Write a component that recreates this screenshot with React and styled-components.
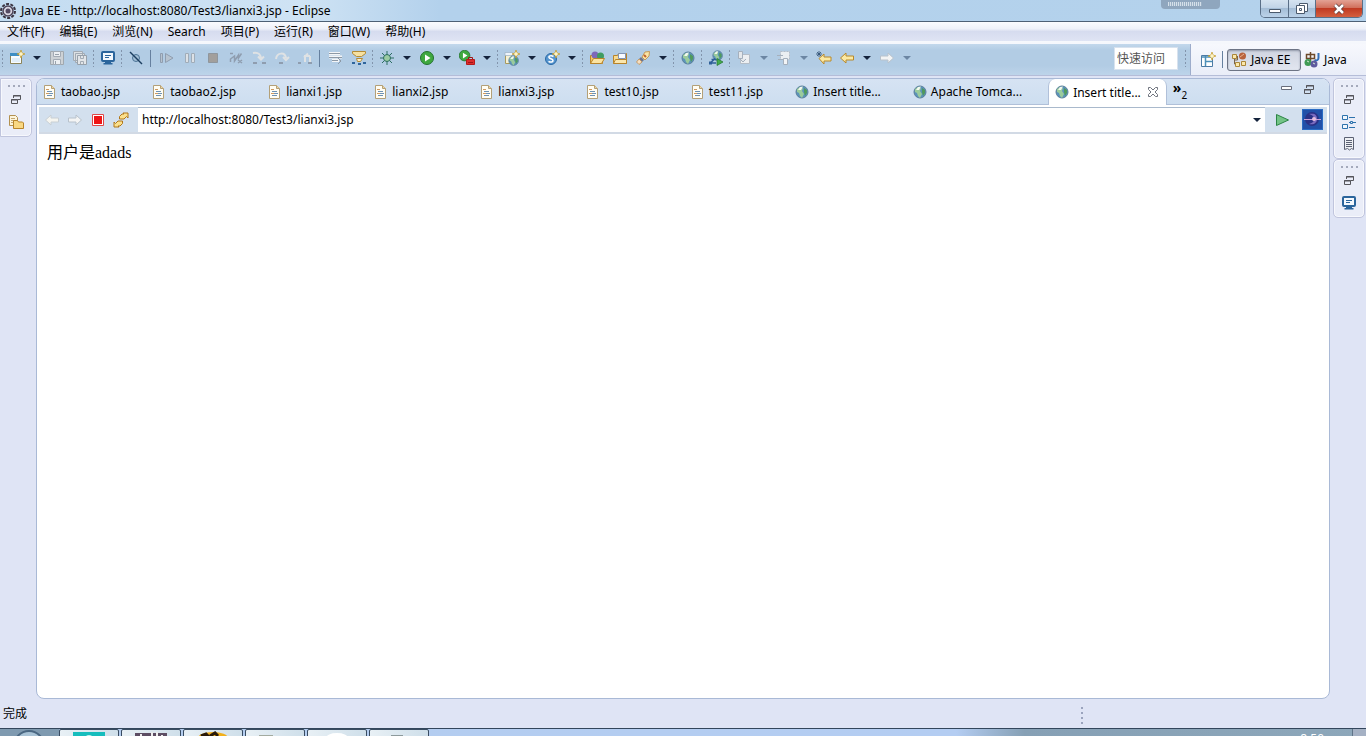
import React from 'react';
import styled, { createGlobalStyle } from 'styled-components';


const GlobalStyle = createGlobalStyle`
    * {
        box-sizing: border-box;
    }
    body {
        margin: 0;
        background: #dfe4f5;
        color: #000;
        font-family: 'Noto Sans', 'Noto Sans CJK SC', sans-serif;
        font-size: 12px;
    }
    button, input {
        font: inherit;
        color: inherit;
    }
    button {
        border: 0;
        padding: 0;
        background: none;
    }
    svg {
        display: block;
        flex: none;
    }
`

const Shell = styled.div`
    display: flex;
    flex-direction: column;
    height: 100vh;
    overflow: hidden;
`

/* title bar */
const TitleBar = styled.header`
    position: relative;
    display: flex;
    align-items: flex-start;
    height: 22px;
    background: linear-gradient(90deg, #c3dcf1 0, #cfe3f4 300px, #b3d1ec 440px, #b4d2ec 100%);
    border-bottom: 1px solid #4d6075;
    h1 {
        flex: 1;
        margin: 0;
        padding-left: 5px;
        font-size: 12px;
        font-weight: 400;
        line-height: 21px;
    }
    > svg {
        margin-top: 3px;
    }
`

const DockGrip = styled.div`
    position: absolute;
    top: 0;
    right: 146px;
    width: 59px;
    height: 9px;
    padding: 2px 7px;
    background: #8fa6be;
    border-radius: 0 0 4px 4px;
    div {
        width: 34px;
        height: 4px;
        background: repeating-linear-gradient(90deg, #d5e0ea 0 1px, #9bb0c5 1px 2px);
    }
`

const WindowButtons = styled.div`
    display: flex;
    height: 18px;
    margin-right: 3px;
    border: 1px solid #5a6f87;
    border-top: 0;
    border-radius: 0 0 5px 5px;
    overflow: hidden;
`

const WindowButton = styled.button`
    display: flex;
    align-items: center;
    justify-content: center;
    width: ${p => (p.$close ? '47px' : '27px')};
    border-left: ${p => (p.$first ? '0' : '1px solid #5a6f87')};
    background: ${p => p.$close
        ? 'linear-gradient(#e3a294 0, #d1705c 45%, #c03a22 50%, #d4603f 100%)'
        : 'linear-gradient(#d5e3f0 0, #c1d4e7 45%, #a4bdd6 50%, #bcd3e9 100%)'};
`

/* menu */
const MenuBar = styled.nav`
    display: flex;
    gap: 1px;
    height: 20px;
    background: linear-gradient(#fafbfe 0, #eef1f9 35%, #d6dcef 50%, #dfe4f4 100%);
    border-bottom: 1px solid #f6f8fc;
    button {
        padding: 0 7px;
        line-height: 19px;
    }
`

/* toolbar */
const ToolRow = styled.div`
    display: flex;
    height: 34px;
    border-top: 2px solid #f5f7fc;
    border-bottom: 1px solid #b5bdd8;
    background: #eef1fa;
`

const Toolbar = styled.div`
    display: flex;
    align-items: center;
    flex: 1;
    padding: 0 2px 3px 0;
    background: linear-gradient(#c3d8ec 0, #b2cce4 20%, #b2cce4 70%, #bdd4ea 100%);
`

const Grip = styled.span`
    flex: none;
    width: 1px;
    height: 17px;
    margin: 0 2px;
    background: repeating-linear-gradient(#8294ac 0 2px, transparent 2px 4px);
`

const Separator = styled.span`
    flex: none;
    width: 1px;
    height: 17px;
    margin: 0 4px 0 3px;
    background: #66809f;
`

const ToolButton = styled.button`
    display: flex;
    align-items: center;
    justify-content: center;
    width: 23px;
    height: 24px;
`

const MenuArrow = styled.button`
    display: flex;
    align-items: center;
    justify-content: center;
    width: 17px;
    height: 24px;
    &::before {
        content: '';
        border: 4px solid transparent;
        border-top-color: ${p => (p.$off ? '#6c86a3' : '#14233c')};
        border-bottom: 0;
    }
`

const QuickAccess = styled.input`
    width: 64px;
    height: 23px;
    margin: 0 5px 0 auto;
    padding: 0 2px;
    border: 1px solid #d8e2ee;
    background: #fff;
    &::placeholder {
        color: #555;
        opacity: 1;
    }
`

const Perspectives = styled.div`
    display: flex;
    align-items: center;
    width: 176px;
    padding-left: 5px;
    border-left: 1px solid #9daccb;
    background: linear-gradient(#f7f8fd, #e9edf8);
`

const Perspective = styled.button`
    display: flex;
    align-items: center;
    gap: 4px;
    min-width: ${p => (p.$on ? '74px' : '60px')};
    height: 22px;
    padding: 0 3px;
    white-space: nowrap;
    border: ${p => (p.$on ? '1px solid #6d7485' : '0')};
    border-radius: 3px;
    background: ${p => (p.$on ? 'linear-gradient(#cfd4e0, #e2e6f0)' : 'none')};
    box-shadow: ${p => (p.$on ? 'inset 0 1px 2px #9298a8' : 'none')};
`

/* workbench */
const Workbench = styled.main`
    display: flex;
    flex: 1;
    min-height: 0;
    padding-top: 2px;
`

const TrimColumn = styled.aside`
    display: flex;
    flex-direction: column;
    width: 33px;
`

const TrimStack = styled.div`
    display: flex;
    flex-direction: column;
    align-items: center;
    gap: 2px;
    width: 32px;
    padding: 6px 0 4px;
    border: 1px solid #c0c5dd;
    border-radius: ${p => (p.$left ? '0 5px 5px 0' : '5px')};
    background: #eaedf8;
    box-shadow: inset 0 0 0 1px #f7f8fd;
`

const TrimHandle = styled.span`
    width: 17px;
    height: 2px;
    margin-bottom: 1px;
    background: repeating-linear-gradient(90deg, #a4a9bb 0 2px, transparent 2px 5px);
`

const TrimButton = styled.button`
    display: flex;
    align-items: center;
    justify-content: center;
    width: 24px;
    height: 20px;
`

const Editor = styled.section`
    display: flex;
    flex-direction: column;
    flex: 1;
    min-width: 0;
    margin: 0 3px;
    border: 1px solid #a9b9d6;
    border-radius: 8px;
    background: #fff;
    overflow: hidden;
`

const TabBar = styled.div`
    display: flex;
    height: 26px;
    background: linear-gradient(#d6e3f3, #cddef0);
    border-bottom: 1px solid #b0c0d9;
`

const Tab = styled.div`
    display: flex;
    align-items: center;
    height: ${p => (p.$active ? '26px' : '25px')};
    padding: 0 ${p => (p.$active ? '7px' : '26px')} 0 5px;
    border: ${p => (p.$active ? '1px solid #b0c0d9' : '0')};
    border-width: 0 1px;
    border-radius: 7px 7px 0 0;
    background: ${p => (p.$active ? '#fff' : 'none')};
    button {
        display: flex;
        align-items: center;
        height: 25px;
        white-space: nowrap;
    }
    .title {
        gap: 3px;
    }
    .close {
        margin-left: 6px;
    }
`

const MoreTabs = styled.button`
    display: flex;
    align-items: flex-start;
    padding: 0 6px;
    line-height: 18px;
    b {
        font-size: 14px;
    }
    span {
        padding-top: 8px;
        font-size: 10px;
        line-height: 16px;
    }
`

const TabTools = styled.div`
    display: flex;
    align-items: flex-start;
    gap: 6px;
    margin-left: auto;
    padding: 3px 12px 0 0;
`

const BrowserBar = styled.div`
    display: flex;
    align-items: center;
    height: 27px;
    margin: 2px 2px 0;
    padding-left: 1px;
    background: #d3e0ee;
    border-bottom: 2px solid #d2dae5;
`

const UrlBox = styled.div`
    display: flex;
    flex: 1;
    height: 25px;
    margin: 0 5px 0 6px;
    background: #fff;
    border-top: 1px solid #a9b9cc;
    input {
        flex: 1;
        min-width: 0;
        padding: 0 4px 2px;
        border: 0;
        outline: 0;
        background: none;
    }
`

const EclipseBadge = styled.span`
    margin: 0 4px 0 9px;
`

const Page = styled.article`
    flex: 1;
    padding: 9px 10px;
    font-family: 'Liberation Serif', 'Noto Sans CJK SC', serif;
    font-size: 16px;
    line-height: 20px;
`

const StatusBar = styled.footer`
    display: flex;
    align-items: center;
    height: 29px;
    padding: 0 283px 2px 3px;
    span:last-child {
        margin: 5px 0 0 auto;
        width: 2px;
        height: 17px;
        background: repeating-linear-gradient(#9aa3bd 0 2px, transparent 2px 5px);
    }
`

/* only the top edge of the system taskbar is visible */
const Taskbar = styled.div`
    display: flex;
    gap: 2px;
    height: 8px;
    overflow: hidden;
    border-top: 1px solid #33465c;
    background: linear-gradient(90deg, #7f9ab0 0 59px, #b4cdef 60px, #b4cdf2 70%, #86a0b5 75%, #8da7ba 100%);
`

const Start = styled.button`
    width: 57px;
    height: 8px;
    svg {
        margin: 0 auto;
    }
`

const Task = styled.button`
    width: 60px;
    height: 9px;
    border: 1px solid #394c62;
    border-radius: 2px 2px 0 0;
    background: linear-gradient(90deg, #e8f0f5, #cfdfea);
    svg {
        margin: 1px auto 0;
    }
`

const Clock = styled.time`
    margin: 4px 26px 0 auto;
    color: #fff;
    line-height: 12px;
`

const ShowDesktop = styled.button`
    width: 14px;
    border-left: 1px solid #5f7488;
    background: #a5b1c4;
`

const Svg = ({ children, w = 16, h = 16 }) => (
    <svg width={w} height={h} viewBox={`0 0 ${w} ${h}`} fill="none">{children}</svg>
)

const Globe = ({ x = 0, y = 0 }) => (
    <g transform={`translate(${x} ${y})`}>
        <circle cx="7" cy="7" r="6" fill="#5b93ba" stroke="#5a7f99" />
        <path d="M2 4l3-2 3 1-1 3 2 3-2 4-2-2-1-3-2-1z" fill="#9acb9c" />
        <path d="M9 3l3 2v3l-2 3-1-4z" fill="#4f9a5c" />
        <path d="M3 5l2-3 3-.5L6 5z" fill="#f2f8ee" />
    </g>
)

const Play = ({ r = 6.500 }) => (
    <>
        <circle cx="8" cy="8" r={r} fill="#3ea83f" stroke="#23722f" />
        <path d="M6 4.500l5.500 3.500L6 11.500z" fill="#fff" />
    </>
)

const Spark = ({ x = 12, y = 4 }) => (
    <g transform={`translate(${x} ${y})`}>
        <path d="M0-4L1-1 4 0 1 1 0 4-1 1-4 0-1-1z" fill="#f6dc7c" stroke="#c29a2c" strokeWidth=".7" />
        <path d="M0-2v4M-2 0h4" stroke="#fffbe0" />
    </g>
)

const Arrow = ({ fill, stroke }) => (
    <path d="M1.500 8L7 3v3h7.500v4H7v3z" fill={fill} stroke={stroke} strokeLinejoin="round" />
)

const grey = '#8f9daf'

const icons = {
    eclipse: (
        <>
            <circle cx="8" cy="8" r="7" stroke="#3a3340" strokeWidth="2" strokeDasharray="3 1.400" />
            <circle cx="8" cy="8" r="5" fill="#d9d6e2" stroke="#4b4357" strokeWidth="1.500" />
            <circle cx="8" cy="8" r="2.500" fill="#544a63" />
        </>
    ),
    newFile: (
        <>
            <path d="M1.500 4.500h11v9h-11z" fill="#f8fcff" stroke="#8b8358" />
            <path d="M1 3h9v3H1z" fill="#3e8ec4" />
            <path d="M3 8h8v4H3z" fill="#e2effa" />
            <Spark x={12} y={4} />
        </>
    ),
    save: (
        <>
            <path d="M1.500 1.500h13v13h-13z" fill="#cdd2d6" stroke="#a0a8af" />
            <path d="M4.500 1.500h7v5h-7zM4.500 9.500h7v5h-7z" fill="#eceff2" stroke="#a3abb4" />
            <path d="M6.500 11v3M6 4.500h4" stroke="#98a1aa" />
        </>
    ),
    saveAll: (
        <>
            <path d="M1.500 1.500h9v9h-9zM3.500 3.500h9v9h-9z" fill="#dde1e4" stroke="#a3abb4" />
            <path d="M5.500 5.500h9v9h-9z" fill="#e2e5e8" stroke="#98a1aa" />
            <path d="M8.500 6v2.500h3V6M8.500 14v-2.500h3V14" stroke="#a3abb4" />
        </>
    ),
    monitor: (
        <>
            <rect x="2" y="2" width="12" height="9" rx="1" fill="#f3f8fd" stroke="#2b659c" strokeWidth="2" />
            <path d="M5 5.500h6M5 7.500h4" stroke="#2b659c" />
            <path d="M5 12h6v1h1.500v1.500h-9V13H5z" fill="#2b659c" />
        </>
    ),
    skip: (
        <>
            <circle cx="8" cy="8" r="3.500" fill="#a3bfd6" stroke="#4b7396" />
            <path d="M2 2l12 12" stroke="#1c3e60" strokeWidth="1.400" />
        </>
    ),
    resume: (
        <path d="M1.500 3.500h2v9h-2zM6.500 3.500L14 8l-7.500 4.500z" fill="#b7c3cf" stroke={grey} />
    ),
    pause: <path d="M3.500 3.500h3v9h-3zM9.500 3.500h3v9h-3z" fill="#dce1e6" stroke="#a0acb8" />,
    stopOff: <path d="M3.500 3.500h9v9h-9z" fill="#a29f9c" stroke="#8f969d" />,
    disconnect: (
        <path d="M2 3.500h3M2.500 12V9l4-3v5l4-6v3l3-4.500M10 10l4 3M10 13l4-3" stroke={grey} strokeWidth="1.500" />
    ),
    stepInto: (
        <>
            <path d="M2 3c6-1 8 2 8 6M7 6.500l3 3 3-3" stroke="#dfe2e4" strokeWidth="2" />
            <path d="M2 13h4M11 13h4" stroke={grey} strokeWidth="2" />
        </>
    ),
    stepOver: (
        <>
            <path d="M2 9c1-7 9-7 10-1M9 7l3 3 3-3" stroke="#dfe2e4" strokeWidth="2" />
            <path d="M5 13h4" stroke={grey} strokeWidth="2" />
        </>
    ),
    stepReturn: (
        <>
            <path d="M8 12V6h5M11 3.500l-4 4M13 6v6" stroke="#dfe2e4" strokeWidth="2" />
            <path d="M1 13h3M11 13h4" stroke={grey} strokeWidth="2" />
        </>
    ),
    dropFrame: (
        <>
            <path d="M1 3.500h11M1 7h13M4 10.500h7" stroke="#f3f5f7" strokeWidth="3" />
            <path d="M1 3.500h11M1 7.500h13M4 10.500h6M10 8l3 3-3 3" stroke="#8d99a6" />
        </>
    ),
    stepFilter: (
        <>
            <path d="M1.500 1.500h13v2l-4 3h-5l-4-3z" fill="#f6e1a1" stroke="#b38b35" />
            <path d="M5.500 8.500h6l-2 3h-3z" fill="#fbeecb" stroke="#b38b35" />
            <path d="M1 13h3M7 14h3M12 13h3" stroke="#2f659c" strokeWidth="2" />
        </>
    ),
    debug: (
        <>
            <path d="M8 1v14M1 8h14M3 3l10 10M13 3L3 13" stroke="#2c6e62" />
            <circle cx="8" cy="8" r="3.500" fill="#9bcba2" stroke="#2c6e62" />
        </>
    ),
    run: <Play />,
    external: (
        <>
            <g transform="translate(-1 -1) scale(.82)"><Play /></g>
            <path d="M7.500 9.500h8v5h-8z" fill="#dc2b2b" stroke="#b51a1a" />
            <path d="M9.500 9V7.500h4V9M9 12.500h5" stroke="#9d1616" />
        </>
    ),
    newServer: (
        <>
            <path d="M1.500 4.500h6v9h-6z" fill="#f5f1d6" stroke="#a89a5d" />
            <path d="M1 2.500h8v3H1z" fill="#eef4fa" stroke="#9bb0c4" strokeWidth=".7" />
            <g transform="translate(4 5) scale(.8)"><Globe /></g>
            <Spark x={12} y={4} />
        </>
    ),
    newServlet: (
        <>
            <circle cx="7" cy="9" r="5.500" fill="#5595cf" stroke="#2868a6" />
            <path d="M9.500 6.500C7 5 4.500 6 5 7.500s4 1 4 3-2.500 2-4.500.8" stroke="#fff" strokeWidth="1.500" />
            <Spark x={12} y={4} />
        </>
    ),
    openType: (
        <>
            <path d="M1.500 13.500v-8h3l1 2h8v6z" fill="#f3c867" stroke="#b8842b" />
            <circle cx="6" cy="5" r="3.500" fill="#7d68ba" />
            <circle cx="11.500" cy="6" r="3.500" fill="#3f9c61" />
            <path d="M1.500 13.500l3-5h11l-3 5z" fill="#fbe3a1" stroke="#b8842b" />
        </>
    ),
    openTask: (
        <>
            <path d="M1.500 13.500v-8h4l1-2h8v10z" fill="#f8db90" stroke="#b8842b" />
            <path d="M6.500 3.500h7v5h-7z" fill="#f8fbff" stroke="#8194b5" />
            <path d="M1.500 13.500l2-4h11v4z" fill="#fbe6ac" stroke="#b8842b" />
        </>
    ),
    search: (
        <>
            <path d="M10 2l4.500-.5L14 6l-4 4-3-3z" fill="#fae5a6" stroke="#c39a58" />
            <path d="M6 7l3 3-2 2-3-3z" fill="#6d7790" />
            <path d="M4 9l3 3-3 2.500L1.500 12z" fill="#f7dfc0" stroke="#c39a68" />
            <path d="M9 5l2 2" stroke="#c0602e" strokeWidth="2" />
        </>
    ),
    globe: <Globe x={1} y={1} />,
    webService: (
        <>
            <g transform="translate(4 0) scale(.8)"><Globe /></g>
            <path d="M7 8.500L3 12.500M3.500 9.500h5M2 13h6" stroke="#2e5f98" strokeWidth="1.500" />
            <path d="M9 8.500l6 3.500-6 3.500z" fill="#43ab4c" stroke="#23722f" strokeWidth=".7" />
            <path d="M1 11.500h3v3H1z" fill="#2e5f98" />
        </>
    ),
    nextNote: (
        <>
            <path d="M6.500 4.500h7v9h-9v-3z" fill="#eceff2" stroke="#b4bdc7" />
            <path d="M2.500 1.500h4v7h-4zM4 9l3 3 3-3" fill="#e3e7eb" stroke="#a5b0bd" />
        </>
    ),
    prevNote: (
        <>
            <path d="M4.500 1.500h9v8h-9z" fill="#eceff2" stroke="#b4bdc7" strokeDasharray="2 1" />
            <path d="M7.500 14.500v-6h4v6zM1 5.500h6M2 9.500h5" fill="#f2f4f6" stroke="#a5b0bd" />
        </>
    ),
    lastEdit: (
        <>
            <path d="M3 8.500L8 4v3h7v4H8v3z" fill="#fbe9a3" stroke="#b8892b" />
            <path d="M3 1v6M0 4h6M1 2l4 4M5 2L1 6" stroke="#2e4f72" strokeWidth=".8" />
        </>
    ),
    back: <Arrow fill="#fbe9a3" stroke="#b8892b" />,
    backOff: <Arrow fill="#f5f5f0" stroke="#c8cfd4" />,
    forwardOff: <g transform="translate(16 0) scale(-1 1)"><Arrow fill="#f3f4f4" stroke="#b8c2cc" /></g>,
    openPersp: (
        <>
            <path d="M1.500 3.500h11v11h-11z" fill="#fff" stroke="#4c7ba5" />
            <path d="M2 5h10M5.500 4v10M5 9.500h7" stroke="#4c8fb8" strokeWidth="1.500" />
            <Spark x={12} y={4} />
        </>
    ),
    javaEE: (
        <>
            <path d="M3.500 5v7H9M3.500 8h3V4" stroke="#7a6448" />
            <path d="M1.500 2.500h4v4h-4zM4.500 10.500h4v4h-4zM10.500 9.500h4v4h-4z" fill="#fbe8ac" stroke="#ab8739" />
            <circle cx="11.500" cy="4" r="3.500" fill="#b8623c" />
            <path d="M9 5l4-3" stroke="#e9b18e" />
        </>
    ),
    java: (
        <>
            <path d="M2.500 2.500h8v4h-8zM6.500 0v9" stroke="#6d4a2b" strokeWidth="1.500" />
            <path d="M14.500 1v5c0 2-2 3-4 2" stroke="#3471ba" strokeWidth="2" />
            <circle cx="4" cy="10.500" r="3.500" fill="#3f9b55" />
            <circle cx="10" cy="12" r="3.500" fill="#5e5a9e" />
            <path d="M3 9l2 1M9 11l2 1" stroke="#d4ead4" />
        </>
    ),
    jsp: (
        <>
            <path d="M2.500 1.500h7l3 3v10h-10z" fill="#fffdf4" stroke="#b3a078" />
            <path d="M9.500 1.500v3h3" fill="#f2d6a0" stroke="#b3a078" />
            <path d="M4 5.500h3M4 9.500h3" stroke="#cf9a62" />
            <path d="M5 7.500h5M7 9.500h4M5 11.500h5" stroke="#6d92b5" />
        </>
    ),
    stop: (
        <>
            <path d="M2.500 2.500h11v11h-11z" fill="#fff" stroke="#e04848" />
            <path d="M4 4h8v8H4z" fill="#ee1515" />
        </>
    ),
    refresh: (
        <>
            <path d="M6.500 7V4.500L9 2h2l-1-1h5v5l-1.500-1.500L11 7zM9.500 9v2.500L7 14H5l1 1H1v-5l1.500 1.500L5 9z" fill="#fbe08c" stroke="#b0761b" strokeLinejoin="round" />
        </>
    ),
    go: <path d="M2.500 2.500l12 5.500-12 5.500z" fill="#73c486" stroke="#2c8445" strokeLinejoin="round" />,
    restore: (
        <path d="M5.500 6V3.500h7v4H10M5 4h8M3.500 7.500h6v4h-6zM3 8h7" stroke="#55555a" />
    ),
    minimize: <path d="M2.500 4.500h10v3h-10z" fill="#fff" stroke="#6a6f7c" />,
    files: (
        <>
            <path d="M1.500 1.500h6l2 2v8h-8z" fill="#fdf5dc" stroke="#b39150" />
            <path d="M3 4.500h4M3 6.500h4M3 8.500h2" stroke="#c4a873" />
            <path d="M5.500 14.500v-8h4l1 1.500h4l1 1v5.500z" fill="#f9d883" stroke="#b8842b" />
        </>
    ),
    outline: (
        <>
            <path d="M1.500 1.500h5v4h-5zM1.500 10.500h5v4h-5z" fill="#f1f7fd" stroke="#2d72ad" />
            <path d="M8 3.500h6M8 8.500h2M11 8.500h4M8 13.500h6" stroke="#2d72ad" />
            <path d="M9.500 7.500h2v2h-2z" stroke="#2d72ad" />
        </>
    ),
    palette: (
        <>
            <path d="M3.500 1.500h9v12l-2-1-2 1.500-2-1.500-3 1z" fill="#eef0f4" stroke="#5b6173" />
            <path d="M5 4.500h6M5 6.500h6M5 8.500h6M5 10.500h6" stroke="#5b6173" />
        </>
    ),
}

const Icon = ({ name }) => <Svg>{icons[name]}</Svg>

// + has a drop-down arrow, - has a disabled one
const tools = [
    '|', 'newFile+', 'save', 'saveAll', '|', 'monitor', '|', 'skip', '/',
    'resume', 'pause', 'stopOff', 'disconnect', 'stepInto', 'stepOver', 'stepReturn', '/',
    'dropFrame', 'stepFilter', '|', 'debug+', 'run+', 'external+', '|',
    'newServer+', 'newServlet+', '|', 'openType', 'openTask', 'search+', '|',
    'globe', '|', 'webService', '|', 'nextNote-', 'prevNote-', 'lastEdit', 'back+', 'forwardOff-',
]

const menus = ['文件(F)', '编辑(E)', '浏览(N)', 'Search', '项目(P)', '运行(R)', '窗口(W)', '帮助(H)']

const tabs = [
    ['jsp', 'taobao.jsp'],
    ['jsp', 'taobao2.jsp'],
    ['jsp', 'lianxi1.jsp'],
    ['jsp', 'lianxi2.jsp'],
    ['jsp', 'lianxi3.jsp'],
    ['jsp', 'test10.jsp'],
    ['jsp', 'test11.jsp'],
    ['globe', 'Insert title...'],
    ['globe', 'Apache Tomca...'],
    ['globe', 'Insert title...', true],
]

function Tool({ item }) {
    if (item === '|') return <Grip />
    if (item === '/') return <Separator />
    const name = item.replace(/[+-]$/, '')
    return (
        <>
            <ToolButton aria-label={name}><Icon name={name} /></ToolButton>
            {name !== item && <MenuArrow aria-label={`${name} menu`} $off={item.endsWith('-')} />}
        </>
    )
}

function Trim({ names, left }) {
    return (
        <TrimStack $left={left}>
            <TrimHandle />
            {names.map(name => (
                <TrimButton key={name} aria-label={name}><Icon name={name} /></TrimButton>
            ))}
        </TrimStack>
    )
}

export default function App() {
    return (
        <Shell>
            <GlobalStyle />
            <TitleBar>
                <Icon name="eclipse" />
                <h1>Java EE - http://localhost:8080/Test3/lianxi3.jsp - Eclipse</h1>
                <DockGrip><div /></DockGrip>
                <WindowButtons>
                    <WindowButton $first aria-label="minimize">
                        <Svg><path d="M2.500 8.500h11v3h-11z" fill="#fff" stroke="#4b5a6c" /></Svg>
                    </WindowButton>
                    <WindowButton aria-label="restore">
                        <Svg>
                            <path d="M5.500 2.500h8v8h-8z" fill="#fff" stroke="#4b5a6c" />
                            <path d="M2.500 4.500h8v8h-8z" fill="#fff" stroke="#4b5a6c" />
                            <path d="M5.500 7.500h2v2h-2z" stroke="#4b5a6c" />
                        </Svg>
                    </WindowButton>
                    <WindowButton $close aria-label="close">
                        <Svg>
                            <path d="M4 4l8 8M12 4l-8 8" stroke="#5c3d3d" strokeWidth="4" />
                            <path d="M4 4l8 8M12 4l-8 8" stroke="#fff" strokeWidth="2.500" />
                        </Svg>
                    </WindowButton>
                </WindowButtons>
            </TitleBar>
            <MenuBar>
                {menus.map(m => <button key={m}>{m}</button>)}
            </MenuBar>
            <ToolRow>
                <Toolbar>
                    {tools.map((item, i) => <Tool key={i} item={item} />)}
                    <QuickAccess placeholder="快速访问" aria-label="快速访问" />
                    <Grip />
                </Toolbar>
                <Perspectives>
                    <ToolButton aria-label="open perspective"><Icon name="openPersp" /></ToolButton>
                    <Separator />
                    <Perspective $on><Icon name="javaEE" />Java EE</Perspective>
                    <Perspective><Icon name="java" />Java</Perspective>
                </Perspectives>
            </ToolRow>
            <Workbench>
                <TrimColumn>
                    <Trim left names={['restore', 'files']} />
                </TrimColumn>
                <Editor>
                    <TabBar>
                        {tabs.map(([icon, label, active], i) => (
                            <Tab key={i} $active={active}>
                                <button className="title"><Icon name={icon} />{label}</button>
                                {active && (
                                    <button className="close" aria-label="close tab">
                                        <Svg w={12} h={12}>
                                            <path d="M1.500 1.500h2L6 4l2.500-2.500h2v2L8 6l2.500 2.500v2h-2L6 8l-2.500 2.500h-2v-2L4 6 1.500 3.500z" stroke="#70757f" />
                                        </Svg>
                                    </button>
                                )}
                            </Tab>
                        ))}
                        <MoreTabs aria-label="2 more tabs"><b>»</b><span>2</span></MoreTabs>
                        <TabTools>
                            <button aria-label="minimize view"><Icon name="minimize" /></button>
                            <button aria-label="restore view"><Icon name="restore" /></button>
                        </TabTools>
                    </TabBar>
                    <BrowserBar>
                        <ToolButton aria-label="back"><Icon name="backOff" /></ToolButton>
                        <ToolButton aria-label="forward"><Icon name="forwardOff" /></ToolButton>
                        <ToolButton aria-label="stop"><Icon name="stop" /></ToolButton>
                        <ToolButton aria-label="refresh"><Icon name="refresh" /></ToolButton>
                        <UrlBox>
                            <input aria-label="address" defaultValue="http://localhost:8080/Test3/lianxi3.jsp" />
                            <MenuArrow aria-label="history" />
                        </UrlBox>
                        <ToolButton aria-label="go"><Icon name="go" /></ToolButton>
                        <EclipseBadge>
                            <Svg w={21} h={21}>
                                <path d="M0 0h21v21H0z" fill="#2a6cc4" />
                                <path d="M1 1h19v19H1z" fill="#2150a8" />
                                <circle cx="10" cy="10" r="7" fill="#2a3186" />
                                <path d="M7 5c6-1 8 1 8 5s-3 6-8 5c4-1 5-3 5-5s-1-4-5-5z" fill="#7a6bc0" />
                                <path d="M2 10.500h17" stroke="#c9a0d8" />
                                <circle cx="12" cy="10" r="2" fill="#e6bfe0" />
                            </Svg>
                        </EclipseBadge>
                    </BrowserBar>
                    <Page>用户是adads</Page>
                </Editor>
                <TrimColumn>
                    <Trim names={['restore', 'outline', 'palette']} />
                    <Trim names={['restore', 'monitor']} />
                </TrimColumn>
            </Workbench>
            <StatusBar>
                <span>完成</span>
                <span />
            </StatusBar>
            <Taskbar>
                <Start aria-label="start">
                    <Svg w={32} h={8}><circle cx="16" cy="17" r="15" fill="#a9c3d6" stroke="#4a6782" strokeWidth="2" /></Svg>
                </Start>
                <Task aria-label="app 1"><Svg w={32} h={8}><path d="M0 1h32v7H0z" fill="#16bdbd" /><circle cx="16" cy="8" r="4" fill="#c9f3f1" /></Svg></Task>
                <Task aria-label="app 2"><Svg w={32} h={8}><path d="M0 2h32v6H0z" fill="#5d4d63" /><path d="M6 3v5M12 5v3M17 1v4M22 1v7M27 4v4" stroke="#eee" strokeWidth="2" /></Svg></Task>
                <Task aria-label="app 3"><Svg w={32} h={8}><ellipse cx="16" cy="7" rx="15" ry="6" fill="#f2b01c" /><path d="M4 5l5-2 3 3M13 5l5-3 3 3" stroke="#2a1a0a" strokeWidth="3" /></Svg></Task>
                <Task aria-label="app 4"><Svg w={32} h={8}><path d="M0 4h14v4H0z" fill="#a3aba0" /></Svg></Task>
                <Task aria-label="app 5"><Svg w={32} h={8}><ellipse cx="16" cy="7" rx="11" ry="5" fill="#fff" /></Svg></Task>
                <Task aria-label="app 6"><Svg w={32} h={8}><path d="M8 4h12v4H8z" fill="#8d9a9c" /></Svg></Task>
                <Clock>8:50</Clock>
                <ShowDesktop aria-label="show desktop" />
            </Taskbar>
        </Shell>
    )
}
